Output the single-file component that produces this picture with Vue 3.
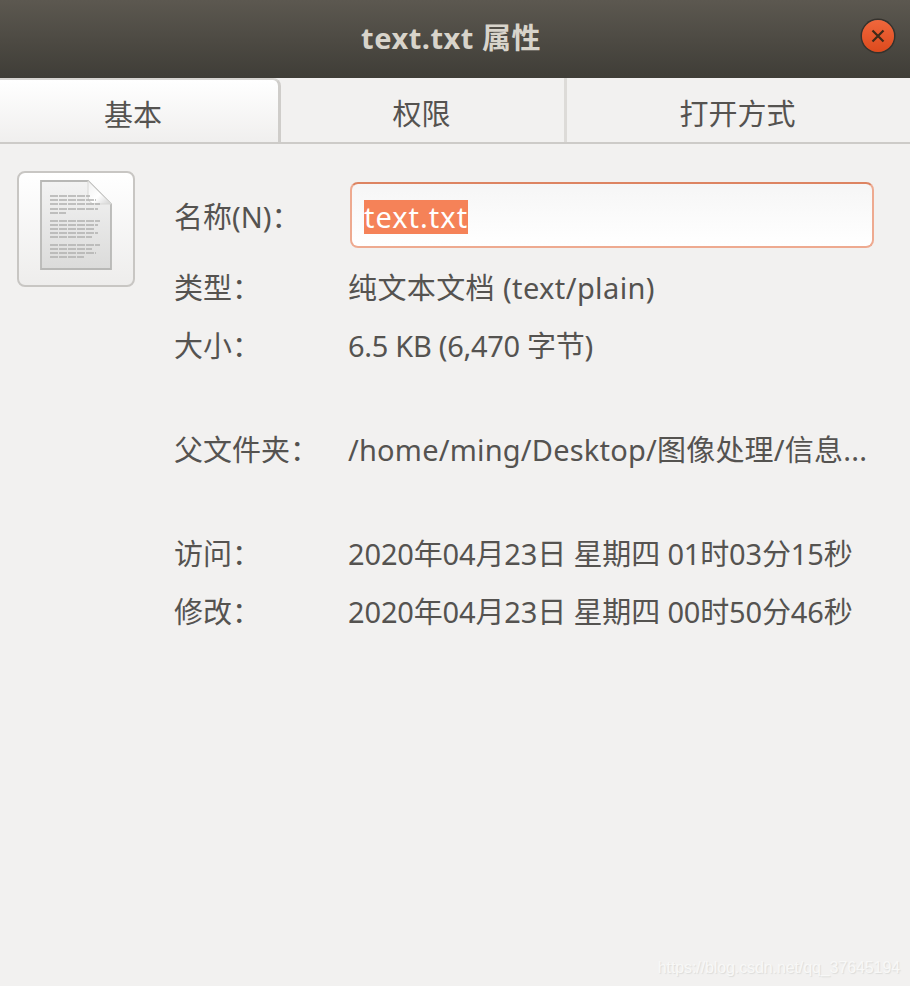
<script setup>
const tabs = ['基本', '权限', '打开方式'];

const rows = [
  { label: '类型：', value: '纯文本文档 (text/plain)', cls: 'row-type' },
  { label: '大小：', value: '6.5 KB (6,470 字节)', cls: 'row-size' },
  { label: '父文件夹：', value: '/home/ming/Desktop/图像处理/信息...', cls: 'row-parent' },
  { label: '访问：', value: '2020年04月23日 星期四 01时03分15秒', cls: 'row-access' },
  { label: '修改：', value: '2020年04月23日 星期四 00时50分46秒', cls: 'row-modify' }
];

// text lines on the document icon: [y, width]
const docLines = [
  [16, 40], [20, 46], [24, 50], [29, 48], [33, 16],
  [41, 50], [45, 48], [49, 44], [53, 48], [57, 42],
  [65, 50], [69, 42], [73, 46], [77, 34]
];
</script>

<template>
  <div class="window">
    <header class="titlebar">
      <span class="title">text.txt 属性</span>
      <button class="close">
        <svg width="14" height="14" viewBox="0 0 14 14">
          <path d="M1.5 1.5 L12.5 12.5 M12.5 1.5 L1.5 12.5" stroke="#3f2a18" stroke-width="2.2" fill="none" />
        </svg>
      </button>
    </header>

    <nav class="tabs">
      <div
        v-for="(tab, i) in tabs"
        :key="tab"
        class="tab"
        :class="{ active: i === 0 }"
      >{{ tab }}</div>
    </nav>

    <main class="content">
      <div class="icon-btn">
        <svg width="72" height="91" viewBox="0 0 72 91">
          <defs>
            <linearGradient id="paper" x1="0" y1="0" x2="0" y2="1">
              <stop offset="0" stop-color="#f3f3f3" />
              <stop offset="1" stop-color="#dbdbda" />
            </linearGradient>
            <linearGradient id="fold" x1="0" y1="0" x2="1" y2="1">
              <stop offset="0" stop-color="#f0f0f0" />
              <stop offset="0.55" stop-color="#ffffff" />
              <stop offset="1" stop-color="#d2d2d2" />
            </linearGradient>
          </defs>
          <path d="M1 1 H48 L71 24 V89 H1 Z" fill="url(#paper)" stroke="#b8b8b6" stroke-width="1.8" />
          <path d="M48 1 L71 24 H56 Q48 24 48 16 Z" fill="url(#fold)" stroke="#d8d8d6" stroke-width="1" />
          <line
            v-for="(line, i) in docLines"
            :key="i"
            x1="10"
            :y1="line[0]"
            :x2="10 + line[1]"
            :y2="line[0]"
            stroke="#b0b0ae"
            stroke-width="1.6"
            stroke-dasharray="8 1"
          />
        </svg>
      </div>

      <div class="fields">
        <div class="row row-name">
          <span class="label">名称(N)：</span>
          <div class="entry"><span class="selected">text.txt</span></div>
        </div>
        <div v-for="row in rows" :key="row.label" class="row" :class="row.cls">
          <span class="label">{{ row.label }}</span>
          <span class="value">{{ row.value }}</span>
        </div>
      </div>
    </main>

    <div class="watermark">https://blog.csdn.net/qq_37645194</div>
  </div>
</template>

<style scoped>
.window {
  position: relative;
  width: 910px;
  height: 986px;
  overflow: hidden;
  background: #f2f1f0;
  color: #555350;
  font-family: "Noto Sans", "Noto Sans CJK SC", sans-serif;
  font-size: 29px;
}

.titlebar {
  height: 78px;
  box-sizing: border-box;
  padding: 0 8px 7px 0;
  display: flex;
  align-items: center;
  justify-content: center;
  position: relative;
  background: linear-gradient(#5c5850, #3f3d37);
}

.title {
  color: #d8d4cb;
  font-size: 29px;
  font-weight: 700;
  letter-spacing: 0.5px;
}

.close {
  position: absolute;
  right: 16px;
  top: 20px;
  width: 32px;
  height: 32px;
  padding: 0;
  border: none;
  border-radius: 50%;
  display: flex;
  align-items: center;
  justify-content: center;
  background: linear-gradient(#f0673c, #dd4a1d);
  box-shadow: 0 0 0 1.5px #35322d;
}

.tabs {
  height: 66px;
  display: grid;
  grid-template-columns: 281px 286px 1fr;
  box-sizing: border-box;
  border-bottom: 2px solid #cdcbc8;
}

.tab {
  display: flex;
  align-items: center;
  justify-content: center;
  padding: 3px 2px 0 0;
  border-right: 3px solid #dddbd8;
  box-sizing: border-box;
}

.tab:last-child {
  border-right: none;
}

.tab.active {
  padding-right: 12px;
  background: linear-gradient(#ffffff, #f0efee);
  border-top: 2px solid #d6d4d1;
  border-right: 3px solid #cfcdca;
  border-top-right-radius: 8px;
}

.content {
  display: flex;
  align-items: flex-start;
  padding: 27px 36px 0 17px;
}

.icon-btn {
  width: 118px;
  height: 116px;
  flex: none;
  box-sizing: border-box;
  display: flex;
  align-items: flex-start;
  justify-content: center;
  padding-top: 7px;
  margin-right: 39px;
  border: 2px solid #c8c6c3;
  border-radius: 8px;
  background: linear-gradient(#ffffff, #eeedec);
}

.fields {
  flex: 1;
  display: flex;
  flex-direction: column;
}

.row {
  display: grid;
  grid-template-columns: 174px 1fr;
  align-items: center;
  height: 58px;
  white-space: nowrap;
}

.row-name {
  height: 66px;
  margin-top: 11px;
  margin-bottom: 9px;
}

.row-type .value {
  letter-spacing: 0.4px;
}

.row-size .value {
  letter-spacing: -0.3px;
}

.row-parent {
  margin-top: 46px;
}

.row-parent .value {
  letter-spacing: 0.2px;
}

.row-access {
  margin-top: 46px;
}

.row-access .value,
.row-modify .value {
  letter-spacing: -0.15px;
}

.entry {
  height: 66px;
  box-sizing: border-box;
  margin-left: 2px;
  padding-left: 12px;
  display: flex;
  align-items: center;
  border: 2px solid #eeaa90;
  border-top-color: #dd8462;
  border-radius: 8px;
  background: linear-gradient(#f6f6f6, #ffffff);
}

.selected {
  margin-top: 4px;
  background: #f58258;
  color: #fff;
  height: 34px;
  line-height: 34px;
  letter-spacing: 1px;
}

.watermark {
  position: absolute;
  right: 10px;
  bottom: 9px;
  font-family: "Liberation Sans", sans-serif;
  font-size: 16px;
  letter-spacing: -0.1px;
  color: #f8f8f7;
  text-shadow: 1px 1px 1px #dcdcda;
}
</style>
